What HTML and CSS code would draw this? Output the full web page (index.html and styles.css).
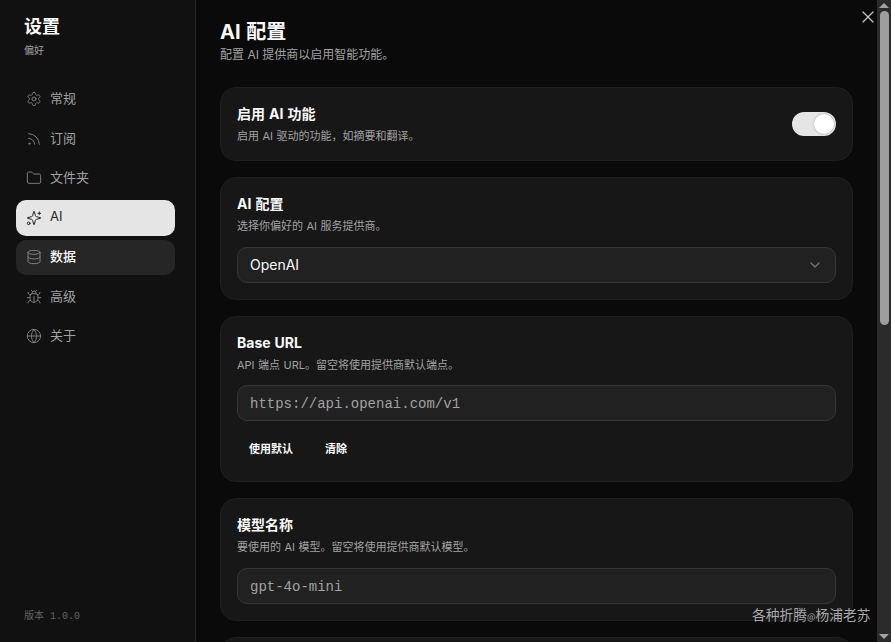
FILE: index.html
```html
<!DOCTYPE html>
<html lang="zh-CN">
<head>
<meta charset="utf-8">
<title>设置</title>
<link rel="stylesheet" href="styles.css">
</head>
<body>
<div class="app">
  <aside class="sidebar">
    <div class="brand">
      <h1 class="brand-title">设置</h1>
      <p class="brand-sub">偏好</p>
    </div>
    <nav class="nav">
      <a class="nav-item"><svg class="icon" viewBox="0 0 24 24"><path d="M12.22 2h-.44a2 2 0 0 0-2 2v.18a2 2 0 0 1-1 1.73l-.43.25a2 2 0 0 1-2 0l-.15-.08a2 2 0 0 0-2.73.73l-.22.38a2 2 0 0 0 .73 2.73l.15.1a2 2 0 0 1 1 1.72v.51a2 2 0 0 1-1 1.74l-.15.09a2 2 0 0 0-.73 2.73l.22.38a2 2 0 0 0 2.73.73l.15-.08a2 2 0 0 1 2 0l.43.25a2 2 0 0 1 1 1.73V20a2 2 0 0 0 2 2h.44a2 2 0 0 0 2-2v-.18a2 2 0 0 1 1-1.73l.43-.25a2 2 0 0 1 2 0l.15.08a2 2 0 0 0 2.73-.73l.22-.39a2 2 0 0 0-.73-2.73l-.15-.08a2 2 0 0 1-1-1.74v-.5a2 2 0 0 1 1-1.74l.15-.09a2 2 0 0 0 .73-2.73l-.22-.38a2 2 0 0 0-2.73-.73l-.15.08a2 2 0 0 1-2 0l-.43-.25a2 2 0 0 1-1-1.73V4a2 2 0 0 0-2-2z"/><circle cx="12" cy="12" r="3"/></svg><span>常规</span></a>
      <a class="nav-item"><svg class="icon" viewBox="0 0 24 24"><path d="M4 11a9 9 0 0 1 9 9"/><path d="M4 4a16 16 0 0 1 16 16"/><circle cx="5" cy="19" r="1"/></svg><span>订阅</span></a>
      <a class="nav-item"><svg class="icon" viewBox="0 0 24 24"><path d="M20 20a2 2 0 0 0 2-2V8a2 2 0 0 0-2-2h-7.9a2 2 0 0 1-1.69-.9L9.6 3.9A2 2 0 0 0 7.93 3H4a2 2 0 0 0-2 2v13a2 2 0 0 0 2 2Z"/></svg><span>文件夹</span></a>
      <a class="nav-item nav-active"><svg class="icon" viewBox="0 0 24 24"><path d="M9.937 15.5A2 2 0 0 0 8.5 14.063l-6.135-1.582a.5.5 0 0 1 0-.962L8.5 9.936A2 2 0 0 0 9.937 8.5l1.582-6.135a.5.5 0 0 1 .963 0L14.063 8.5A2 2 0 0 0 15.5 9.937l6.135 1.581a.5.5 0 0 1 0 .964L15.5 14.063a2 2 0 0 0-1.437 1.437l-1.582 6.135a.5.5 0 0 1-.963 0z"/><path d="M20 3v4"/><path d="M22 5h-4"/><circle cx="4" cy="20" r="2"/></svg><span>AI</span></a>
      <a class="nav-item nav-hover"><svg class="icon" viewBox="0 0 24 24"><ellipse cx="12" cy="5" rx="9" ry="3"/><path d="M3 5V19A9 3 0 0 0 21 19V5"/><path d="M3 12A9 3 0 0 0 21 12"/></svg><span>数据</span></a>
      <a class="nav-item"><svg class="icon" viewBox="0 0 24 24"><path d="m8 2 1.88 1.88"/><path d="M14.12 3.88 16 2"/><path d="M9 7.13v-1a3.003 3.003 0 1 1 6 0v1"/><path d="M12 20c-3.3 0-6-2.7-6-6v-3a4 4 0 0 1 4-4h4a4 4 0 0 1 4 4v3c0 3.3-2.7 6-6 6"/><path d="M12 20v-9"/><path d="M6.53 9C4.6 8.8 3 7.1 3 5"/><path d="M6 13H2"/><path d="M3 21c0-2.1 1.7-3.9 3.8-4"/><path d="M20.97 5c0 2.1-1.6 3.8-3.5 4"/><path d="M22 13h-4"/><path d="M17.2 17c2.1.1 3.8 1.9 3.8 4"/></svg><span>高级</span></a>
      <a class="nav-item"><svg class="icon" viewBox="0 0 24 24"><circle cx="12" cy="12" r="10"/><path d="M12 2a14.5 14.5 0 0 0 0 20 14.5 14.5 0 0 0 0-20"/><path d="M2 12h20"/></svg><span>关于</span></a>
    </nav>
    <div class="version">版本 1.0.0</div>
  </aside>

  <main class="main">
    <header class="page-head">
      <h2 class="page-title">AI 配置</h2>
      <p class="page-sub">配置 AI 提供商以启用智能功能。</p>
    </header>
    <section class="card card-row">
      <div class="card-text">
        <h3 class="card-title">启用 AI 功能</h3>
        <p class="card-sub">启用 AI 驱动的功能，如摘要和翻译。</p>
      </div>
      <div class="toggle"><div class="knob"></div></div>
    </section>
    <section class="card">
      <div class="card-text">
        <h3 class="card-title">AI 配置</h3>
        <p class="card-sub">选择你偏好的 AI 服务提供商。</p>
      </div>
      <div class="field field-select"><span>OpenAI</span><svg class="chevron" viewBox="0 0 24 24"><path d="m6 9 6 6 6-6"/></svg></div>
    </section>
    <section class="card">
      <div class="card-text">
        <h3 class="card-title">Base URL</h3>
        <p class="card-sub">API 端点 URL。留空将使用提供商默认端点。</p>
      </div>
      <div class="field field-mono">https://api.openai.com/v1</div>
      <div class="actions">
        <button class="btn">使用默认</button>
        <button class="btn">清除</button>
      </div>
    </section>
    <section class="card">
      <div class="card-text">
        <h3 class="card-title">模型名称</h3>
        <p class="card-sub">要使用的 AI 模型。留空将使用提供商默认模型。</p>
      </div>
      <div class="field field-mono">gpt-4o-mini</div>
    </section>
    <section class="card card-tail"></section>
  </main>

  <div class="scrollbar">
    <div class="arrow arrow-up"></div>
    <div class="track"><div class="thumb"></div></div>
    <div class="arrow arrow-down"></div>
  </div>
</div>
<button class="close" aria-label="关闭"><svg viewBox="0 0 24 24"><path d="M18 6 6 18"/><path d="m6 6 12 12"/></svg></button>
<div class="watermark">各种折腾<span class="at">@</span>杨浦老苏</div>
</body>
</html>
```

FILE: styles.css
```css
* { box-sizing: border-box; }
html, body { margin: 0; height: 100%; overflow: hidden; }
body {
  background: #0a0a0a;
  color: #fafafa;
  font-family: Inter, "Noto Sans CJK SC", sans-serif;
}
h1, h2, h3, p { margin: 0; }
.app { display: flex; height: 642px; overflow: hidden; }

.sidebar {
  width: 196px;
  flex: none;
  background: #111111;
  border-right: 1px solid #262626;
  padding: 15px 20px 16px 16px;
  display: flex;
  flex-direction: column;
}
.brand { padding: 0 8px; margin-bottom: 23.5px; }
.brand-title { font-size: 18px; line-height: 24px; font-weight: 700; color: #fafafa; }
.brand-sub { font-size: 10px; line-height: 16px; margin-top: 3px; color: #a1a1a1; }
.nav { display: flex; flex-direction: column; gap: 4px; }
.nav-item {
  display: flex;
  align-items: center;
  gap: 8px;
  height: 35.5px;
  padding: 0 10px;
  border-radius: 10px;
  font-size: 13px;
  color: #a1a1a1;
}
.nav-item span { margin-top: -3px; }
.icon {
  width: 16px;
  height: 16px;
  flex: none;
  fill: none;
  stroke: currentColor;
  stroke-width: 1.5;
  stroke-linecap: round;
  stroke-linejoin: round;
  opacity: .75;
}
.nav-active { background: #e5e5e5; color: #262626; }
.nav-active .icon { opacity: 1; }
.nav-hover { background: #262626; color: #fafafa; font-weight: 500; }
.nav-hover .icon { color: #a1a1a1; opacity: .75; }
.version {
  margin-top: auto;
  padding: 0 8px 1px;
  font-family: "Liberation Mono", "Noto Sans CJK SC", monospace;
  font-size: 10px;
  line-height: 16px;
  color: #636363;
}

.main {
  flex: 1;
  min-width: 0;
  padding: 20px 24px 0;
  display: flex;
  flex-direction: column;
  gap: 16px;
  overflow: hidden;
}
.page-head { margin-bottom: 7.6px; }
.page-title { font-size: 20px; line-height: 24px; font-weight: 700; color: #fafafa; word-spacing: 1px; }
.page-sub { font-size: 12px; line-height: 16px; margin-top: 3px; color: #a1a1a1; }

.card {
  flex: none;
  background: #171717;
  border: 1px solid #1f1f1f;
  border-radius: 16px;
  padding: 16px;
  display: flex;
  flex-direction: column;
  gap: 12px;
}
.card-row { flex-direction: row; align-items: center; justify-content: space-between; }
.card-tail { height: 60px; }
.card-text { display: flex; flex-direction: column; gap: 4px; }
.card-title { font-size: 14px; line-height: 20px; font-weight: 700; color: #fafafa; word-spacing: .7px; }
.card-sub { font-size: 11px; line-height: 16.5px; color: #a1a1a1; word-spacing: .4px; }

.toggle {
  width: 44px;
  height: 24px;
  border-radius: 12px;
  background: #e5e5e5;
  padding: 2px;
  display: flex;
  justify-content: flex-end;
}
.knob { width: 20px; height: 20px; border-radius: 50%; background: #ffffff; box-shadow: 0 0 2px rgba(0,0,0,.35); }

.field {
  height: 36px;
  background: #212121;
  border: 1px solid #363636;
  border-radius: 10px;
  padding: 0 12px;
  display: flex;
  align-items: center;
  font-size: 14px;
  color: #fafafa;
}
.field-select { justify-content: space-between; }
.chevron { width: 16px; height: 16px; fill: none; stroke: #737373; stroke-width: 2; stroke-linecap: round; stroke-linejoin: round; }
.field-mono { font-family: "Liberation Mono", monospace; color: #a1a1a1; padding-top: 2px; }

.actions { display: flex; gap: 8px; }
.btn {
  height: 32px;
  padding: 0 12px 2px;
  border: 0;
  border-radius: 8px;
  background: transparent;
  color: #fafafa;
  font-family: inherit;
  font-size: 11px;
  font-weight: 600;
}

.scrollbar {
  width: 14px;
  flex: none;
  background: #2b2b2b;
  display: flex;
  flex-direction: column;
  align-items: center;
}
.arrow { flex: none; width: 14px; height: 11px; display: flex; justify-content: center; align-items: center; }
.arrow::before { content: ""; border-left: 5px solid transparent; border-right: 5px solid transparent; }
.arrow-up::before { border-bottom: 5px solid #a3a3a3; }
.arrow-down::before { border-top: 5px solid #a3a3a3; }
.track { flex: 1; width: 100%; }
.thumb { width: 9px; height: 314px; margin-left: 3px; background: #9e9e9e; border-radius: 5px; }

.close {
  position: absolute;
  top: 7px;
  left: 858px;
  width: 20px;
  height: 20px;
  padding: 0;
  border: 0;
  background: transparent;
  color: #c4c4c4;
}
.close svg { display: block; width: 20px; height: 20px; fill: none; stroke: currentColor; stroke-width: 1.5; stroke-linecap: round; stroke-linejoin: round; }

.watermark {
  position: absolute;
  left: 752px;
  top: 604px;
  font-family: "Noto Sans CJK SC", sans-serif;
  font-size: 13.75px;
  line-height: 20px;
  color: #a8a8a8;
  white-space: nowrap;
}
.at { font-size: 9px; }
```
